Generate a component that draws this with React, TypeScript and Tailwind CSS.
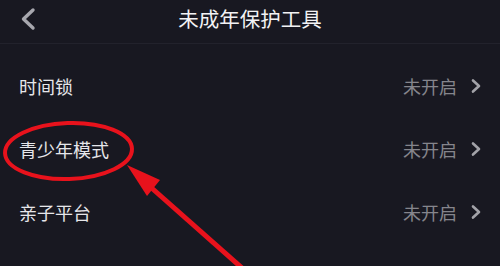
const rows = ['时间锁', '青少年模式', '亲子平台'];

const font = { fontFamily: '"Noto Sans CJK SC", "Noto Sans", sans-serif' };

const RowChevron = () => (
  <svg width="12" height="16" viewBox="0 0 12 16" className="ml-[13px]">
    <path d="M3 2.5 L9 8 L3 13.5" fill="none" stroke="#a2a2a8" strokeWidth="2.6" strokeLinecap="round" strokeLinejoin="round" />
  </svg>
);

const SettingRow = ({ label }: { label: string }) => (
  <div className="flex items-center justify-between h-[63px] pl-[19px] pr-[18px]">
    <span className="text-[18px] text-[#e6e6ea] leading-none">{label}</span>
    <div className="flex items-center">
      <span className="text-[18px] text-[#85858c] leading-none">未开启</span>
      <RowChevron />
    </div>
  </div>
);

export default function App() {
  return (
    <div className="relative w-[500px] h-[266px] overflow-hidden bg-[#181821]" style={font}>
      <div className="relative flex items-center justify-center h-[44px] pb-[6px] border-b border-[#22222c]">
        <svg width="16" height="24" viewBox="0 0 16 24" className="absolute left-[20px] top-[7px]">
          <path d="M13 3 L3.5 12 L13 21" fill="none" stroke="#a7a7ae" strokeWidth="3.4" strokeLinecap="round" strokeLinejoin="round" />
        </svg>
        <span className="text-[20.5px] text-[#f2f2f4] leading-none">未成年保护工具</span>
      </div>

      <div className="pt-[10px]">
        {rows.map((r) => (
          <SettingRow key={r} label={r} />
        ))}
      </div>

      {/* annotation: red circle + arrow drawn over the list */}
      <svg className="absolute left-0 top-0 pointer-events-none" width="500" height="266" viewBox="0 0 500 266">
        <ellipse cx="68.5" cy="151" rx="63.5" ry="28" fill="none" stroke="#e8121c" strokeWidth="4" transform="rotate(-2 68.5 151)" />
        <line x1="146" y1="183" x2="242" y2="268" stroke="#e8121c" strokeWidth="5" />
        <polygon points="127,165 160,180 147,196" fill="#e8121c" />
      </svg>
    </div>
  );
}
